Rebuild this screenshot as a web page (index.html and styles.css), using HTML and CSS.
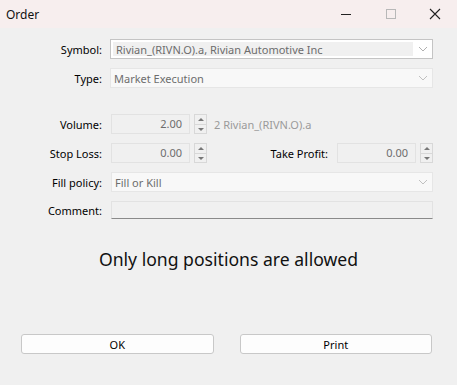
FILE: index.html
```html
<!DOCTYPE html>
<html lang="en">
<head>
    <meta charset="UTF-8">
    <title>Order</title>
    <link rel="stylesheet" href="styles.css">
</head>
<body>
    <div class="window">
        <div class="titlebar">
            <span class="title">Order</span>
            <div class="controls">
                <span class="ctl ctl-min"><svg width="12" height="12" viewBox="0 0 12 12"><path d="M1 6.5h10" stroke="#222" stroke-width="1"/></svg></span>
                <span class="ctl ctl-max"><svg width="12" height="12" viewBox="0 0 12 12"><rect x="1.5" y="1.5" width="9" height="9" fill="none" stroke="#b8b8b8" stroke-width="1"/></svg></span>
                <span class="ctl ctl-close"><svg width="12" height="12" viewBox="0 0 12 12"><path d="M1 1l10 10M11 1L1 11" stroke="#222" stroke-width="1.1"/></svg></span>
            </div>
        </div>

        <div class="form">
            <div class="row row-symbol">
                <label class="lbl">Symbol:</label>
                <div class="combo combo-active">
                    <span class="combo-text">Rivian_(RIVN.O).a, Rivian Automotive Inc</span>
                    <span class="arrow"><svg width="10" height="6" viewBox="0 0 10 6"><path d="M1 1l4 4 4-4" fill="none" stroke="#b0b0b0"/></svg></span>
                </div>
            </div>
            <div class="row row-type">
                <label class="lbl">Type:</label>
                <div class="combo">
                    <span class="combo-text">Market Execution</span>
                    <span class="arrow"><svg width="10" height="6" viewBox="0 0 10 6"><path d="M1 1l4 4 4-4" fill="none" stroke="#c0c0c0"/></svg></span>
                </div>
            </div>

            <div class="row row-volume">
                <label class="lbl">Volume:</label>
                <div class="num">2.00</div>
                <div class="spin"><span class="up"></span><span class="down"></span></div>
                <span class="hint">2 Rivian_(RIVN.O).a</span>
            </div>
            <div class="row row-stops">
                <label class="lbl">Stop Loss:</label>
                <div class="num">0.00</div>
                <div class="spin"><span class="up"></span><span class="down"></span></div>
                <label class="lbl lbl-tp">Take Profit:</label>
                <div class="num">0.00</div>
                <div class="spin"><span class="up"></span><span class="down"></span></div>
            </div>
            <div class="row row-fill">
                <label class="lbl">Fill policy:</label>
                <div class="combo combo-wide">
                    <span class="combo-text">Fill or Kill</span>
                    <span class="arrow"><svg width="10" height="6" viewBox="0 0 10 6"><path d="M1 1l4 4 4-4" fill="none" stroke="#c0c0c0"/></svg></span>
                </div>
            </div>
            <div class="row row-comment">
                <label class="lbl">Comment:</label>
                <div class="edit"></div>
            </div>
        </div>

        <div class="message">Only long positions are allowed</div>

        <div class="buttons">
            <button class="btn">OK</button>
            <button class="btn">Print</button>
        </div>
    </div>
</body>
</html>
```

FILE: styles.css
```css
body {
    margin: 0;
    font-family: "Noto Sans", "Open Sans", sans-serif;
    font-size: 11px;
    background-color: #f0f0f0;
    color: #000;
}

.window {
    width: 457px;
    height: 385px;
    display: flex;
    flex-direction: column;
}

.titlebar {
    height: 28px;
    background-color: #f7eeee;
    display: flex;
    align-items: center;
    justify-content: space-between;
}

.title {
    padding-left: 6px;
    font-size: 12px;
    color: #111;
}

.controls {
    display: flex;
    height: 28px;
}

.ctl {
    width: 45px;
    display: flex;
    align-items: center;
    justify-content: center;
}

.ctl-close {
    width: 44px;
}

.form {
    padding: 11px 24px 0 0;
}

.row {
    display: flex;
    align-items: center;
}

.lbl {
    width: 110px;
    text-align: right;
    padding-right: 8px;
    box-sizing: border-box;
    flex-shrink: 0;
}

.row-symbol {
    height: 20px;
}

.row-type {
    height: 20px;
    margin-top: 9px;
}

.row-volume {
    height: 20px;
    margin-top: 26px;
}

.row-stops {
    height: 20px;
    margin-top: 9px;
}

.row-fill {
    height: 20px;
    margin-top: 9px;
}

.row-comment {
    height: 18px;
    margin-top: 9px;
}

.combo {
    flex: 1;
    height: 20px;
    box-sizing: border-box;
    border: 1px solid #e6e6e6;
    background-color: #f8f8f8;
    display: flex;
    align-items: center;
    color: #6d6d6d;
    padding-left: 3px;
}

.combo-active {
    border-color: #c4c4c4;
    background-color: #fff;
    padding: 2px 0 2px 2px;
}

.combo-active .combo-text {
    background-color: #f0f0f0;
    height: 100%;
    display: flex;
    align-items: center;
    padding-left: 3px;
}

.combo-text {
    flex: 1;
}

.arrow {
    width: 19px;
    display: flex;
    justify-content: center;
}

.combo-wide {
    margin-left: 1px;
}

.num {
    width: 79px;
    height: 20px;
    box-sizing: border-box;
    border: 1px solid #e2e2e2;
    background-color: #f0f0f0;
    color: #6d6d6d;
    text-align: right;
    padding-right: 7px;
    line-height: 18px;
    margin-left: 1px;
}

.spin {
    width: 13px;
    height: 20px;
    box-sizing: border-box;
    border: 1px solid #d8d8d8;
    margin-left: 4px;
    display: flex;
    flex-direction: column;
}

.spin span {
    flex: 1;
    position: relative;
}

.spin .up {
    border-bottom: 1px solid #d8d8d8;
}

.spin .up::after,
.spin .down::after {
    content: "";
    position: absolute;
    left: 3px;
    border-left: 3px solid transparent;
    border-right: 3px solid transparent;
}

.spin .up::after {
    top: 3px;
    border-bottom: 3px solid #777;
}

.spin .down::after {
    top: 3px;
    border-top: 3px solid #777;
}

.hint {
    margin-left: 7px;
    color: #9a9a9a;
}

.lbl-tp {
    width: 129px;
}

.edit {
    flex: 1;
    height: 18px;
    box-sizing: border-box;
    border: 1px solid #e2e2e2;
    border-bottom-color: #8a8a8a;
    background-color: #f0f0f0;
    margin-left: 1px;
}

.message {
    margin-top: 28px;
    text-align: center;
    font-size: 17.6px;
    color: #111;
}

.buttons {
    margin-top: auto;
    margin-bottom: 31px;
    display: flex;
    gap: 26px;
    padding: 0 25px 0 21px;
}

.btn {
    flex: 1;
    height: 20px;
    background-color: #fdfdfd;
    border: 1px solid #c8c8c8;
    border-radius: 3px;
    font-family: inherit;
    font-size: 11px;
    color: #000;
    padding: 0;
}
```
